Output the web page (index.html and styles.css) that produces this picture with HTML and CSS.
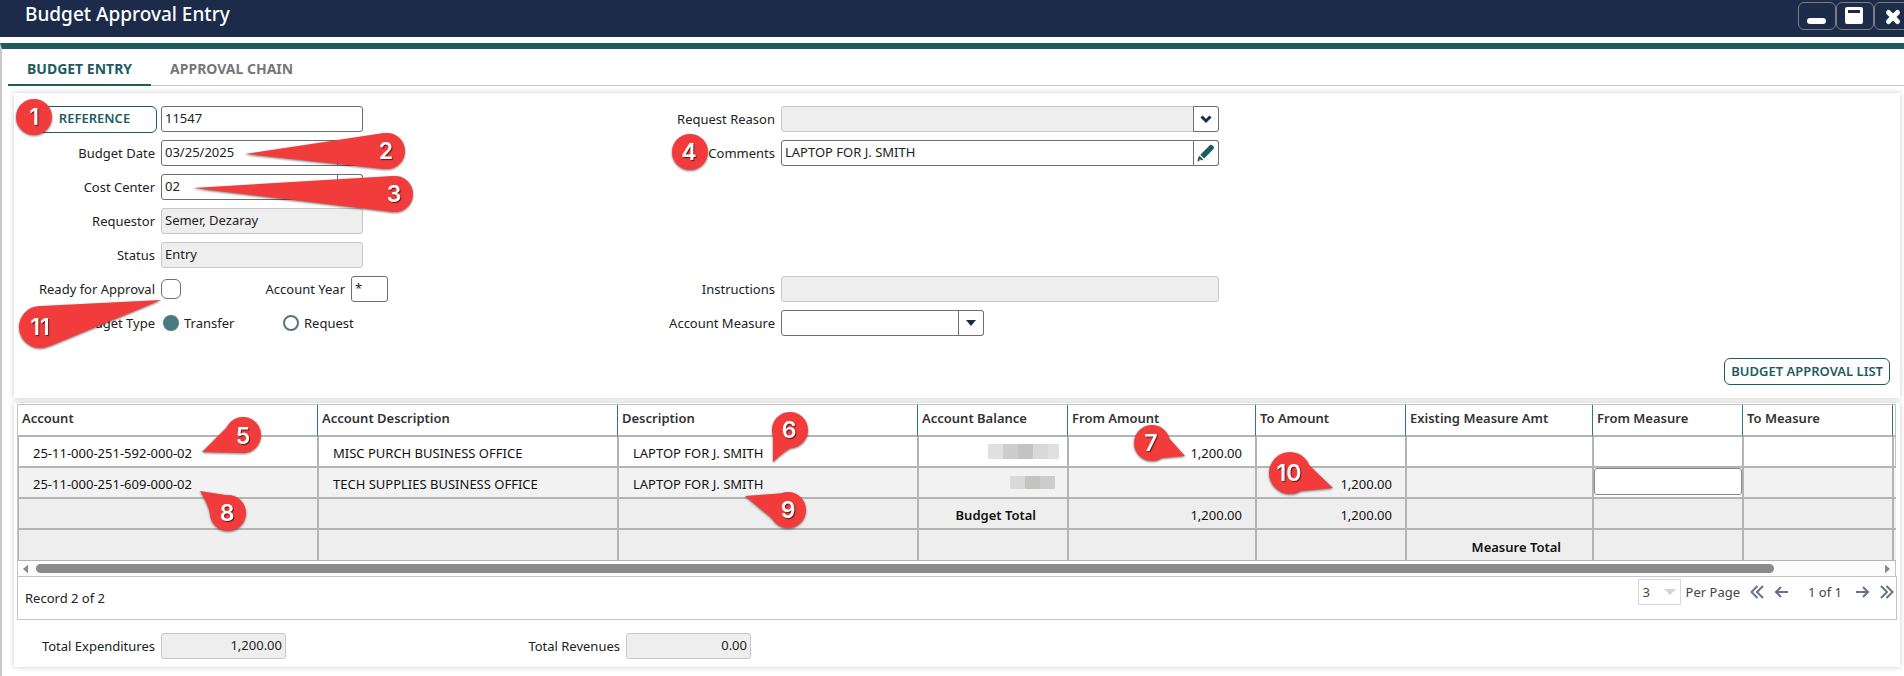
FILE: index.html
```html
<!DOCTYPE html>
<html lang="en">
<head>
  <meta charset="UTF-8">
  <title>Budget Approval Entry</title>
  <link rel="stylesheet" href="styles.css">
</head>
<body>
<header class="titlebar">
  <h1>Budget Approval Entry</h1>
  <div class="window-btns">
    <button class="win-btn" aria-label="Minimize"><svg viewBox="0 0 20 20"><rect x="0" y="12" width="19" height="6" rx="3"/></svg></button>
    <button class="win-btn" aria-label="Maximize"><svg viewBox="0 0 20 20"><path fill-rule="evenodd" d="M3 1h13a2 2 0 0 1 2 2v13a2 2 0 0 1-2 2H2a2 2 0 0 1-2-2V3a2 2 0 0 1 2-2zM3 4v3h12V4z"/></svg></button>
    <button class="win-btn" aria-label="Close"><svg viewBox="0 0 20 20"><path d="M5.500 6.500l9 9M14.500 6.500l-9 9" fill="none" stroke="#fff" stroke-width="5" stroke-linecap="round"/></svg></button>
  </div>
</header>

<main class="window">
  <nav class="tabs">
    <a class="tab active" href="#entry">BUDGET ENTRY</a>
    <a class="tab" href="#chain">APPROVAL CHAIN</a>
  </nav>

  <section class="panel" id="entry">
    <div class="form">
      <div class="form-col">
        <div class="field"><button class="btn ref-btn">REFERENCE</button><input class="box" type="text" value="11547" aria-label="Reference"></div>
        <div class="field"><label for="date">Budget Date</label><div class="combo"><input class="box" id="date" type="text" value="03/25/2025"><button class="combo-btn" aria-label="Pick date"></button></div></div>
        <div class="field"><label for="center">Cost Center</label><div class="combo"><input class="box" id="center" type="text" value="02"><button class="combo-btn" aria-label="Pick cost center"></button></div></div>
        <div class="field"><label for="requestor">Requestor</label><input class="box" id="requestor" type="text" value="Semer, Dezaray" readonly></div>
        <div class="field"><label for="status">Status</label><input class="box" id="status" type="text" value="Entry" readonly></div>
        <div class="field">
          <label for="ready">Ready for Approval</label><input class="check" id="ready" type="checkbox">
          <label class="year-label" for="year">Account Year</label><input class="box year" id="year" type="text" value="*">
        </div>
        <div class="field">
          <span class="label">Budget Type</span>
          <label class="radio"><input type="radio" name="type" checked>Transfer</label>
          <label class="radio"><input type="radio" name="type">Request</label>
        </div>
      </div>

      <div class="form-col wide">
        <div class="field">
          <label for="reason">Request Reason</label>
          <div class="combo">
            <select class="box" id="reason" disabled><option></option></select>
            <span class="combo-icon"><svg viewBox="0 0 12 12"><path d="M1.500 3.500L6 8l4.500-4.500" fill="none" stroke="#1b2b49" stroke-width="3"/></svg></span>
          </div>
        </div>
        <div class="field">
          <label for="comments">Comments</label>
          <div class="combo">
            <input class="box" id="comments" type="text" value="LAPTOP FOR J. SMITH">
            <button class="combo-btn" aria-label="Edit comments"><svg class="pencil" viewBox="0 0 18 18"><path d="M12.500 1.500q1.500-1.500 3 0l1 1q1.200 1.300 0 2.600L7.200 14.600 3.300 10.800zM2.600 11.700l3.700 3.700-2 1.200-1.400-1.500-.7 2.100-1.700.3.500-3.500z"/></svg></button>
          </div>
        </div>
        <div class="field spacer"></div>
        <div class="field spacer"></div>
        <div class="field spacer"></div>
        <div class="field"><label for="instructions">Instructions</label><div class="combo"><input class="box" id="instructions" type="text" readonly></div></div>
        <div class="field">
          <label for="measure">Account Measure</label>
          <div class="combo short">
            <select class="box" id="measure"><option></option></select>
            <span class="combo-icon"><svg viewBox="0 0 12 12"><path d="M1 3h10L6 9z" fill="#1b2b49"/></svg></span>
          </div>
        </div>
      </div>
    </div>
    <div class="panel-actions"><button class="btn">BUDGET APPROVAL LIST</button></div>
  </section>

  <section class="panel grid-panel">
    <div class="grid">
      <table>
        <colgroup>
          <col class="c-first"><col class="c-text"><col class="c-text"><col class="c-amt"><col class="c-from">
          <col class="c-amt"><col class="c-measure"><col class="c-amt"><col class="c-amt"><col class="c-end">
        </colgroup>
        <thead>
          <tr>
            <th>Account</th><th>Account Description</th><th>Description</th><th>Account Balance</th><th>From Amount</th>
            <th>To Amount</th><th>Existing Measure Amt</th><th>From Measure</th><th>To Measure</th><th></th>
          </tr>
        </thead>
        <tbody>
          <tr>
            <td>25-11-000-251-592-000-02</td><td>MISC PURCH BUSINESS OFFICE</td><td>LAPTOP FOR J. SMITH</td>
            <td class="masked"><div class="mask"><i class="m1"></i><i class="m3"></i><i class="m4"></i><i class="m2"></i><i class="m1 thin"></i></div></td>
            <td class="num">1,200.00</td><td></td><td></td><td></td><td></td><td></td>
          </tr>
          <tr class="alt">
            <td>25-11-000-251-609-000-02</td><td>TECH SUPPLIES BUSINESS OFFICE</td><td>LAPTOP FOR J. SMITH</td>
            <td class="masked"><div class="mask low"><i class="m2"></i><i class="m4"></i><i class="m3"></i></div></td>
            <td></td><td class="num">1,200.00</td><td></td><td class="edit"><input type="text" aria-label="From Measure"></td><td></td><td></td>
          </tr>
          <tr class="total">
            <td></td><td></td><td></td><td class="total-label">Budget Total</td><td class="num">1,200.00</td><td class="num">1,200.00</td><td></td><td></td><td></td><td></td>
          </tr>
          <tr class="total">
            <td></td><td></td><td></td><td></td><td></td><td></td><td class="total-label">Measure Total</td><td></td><td></td><td></td>
          </tr>
        </tbody>
      </table>
      <div class="scrollbar">
        <svg viewBox="0 0 6 10"><path d="M6 0v10L0 5z"/></svg>
        <div class="track"><div class="thumb"></div></div>
        <svg viewBox="0 0 6 10"><path d="M0 0v10l6-5z"/></svg>
      </div>
    </div>
    <div class="pager">
      <span class="record">Record 2 of 2</span>
      <div class="pager-nav">
        <div class="page-size">
          <select id="per-page" disabled><option>3</option></select>
          <svg viewBox="0 0 12 6"><path d="M0 0h12L6 6z"/></svg>
        </div>
        <label for="per-page">Per Page</label>
        <button class="nav-btn" aria-label="First page"><svg viewBox="0 0 14 14"><path d="M7.500 1l-6 6 6 6M13 1L7 7l6 6"/></svg></button>
        <button class="nav-btn" aria-label="Previous page"><svg viewBox="0 0 14 14"><path d="M7 2L2 7l5 5M2 7h12"/></svg></button>
        <span class="page-of">1 of 1</span>
        <button class="nav-btn" aria-label="Next page"><svg viewBox="0 0 14 14"><path d="M7 2l5 5-5 5M12 7H0"/></svg></button>
        <button class="nav-btn" aria-label="Last page"><svg viewBox="0 0 14 14"><path d="M6.500 1l6 6-6 6M1 1l6 6-6 6"/></svg></button>
      </div>
    </div>
    <div class="totals">
      <div class="field"><label for="expenditures">Total Expenditures</label><input class="box sum" id="expenditures" type="text" value="1,200.00" readonly></div>
      <div class="field revenues"><label for="revenues">Total Revenues</label><input class="box sum" id="revenues" type="text" value="0.00" readonly></div>
    </div>
  </section>
</main>

<!-- numbered callouts over the form -->
<svg class="callouts">
  <g><circle cx="34" cy="117" r="18"/><text x="34" y="125">1</text></g>
  <g><path d="M245 154L384 133v36z"/><circle cx="387" cy="151" r="18"/><text x="386" y="159">2</text></g>
  <g><path d="M193 188L393 176v36z"/><circle cx="395" cy="194" r="18"/><text x="394" y="202">3</text></g>
  <g><circle cx="690" cy="152" r="18"/><text x="689" y="160">4</text></g>
  <g><path d="M202 452l26-26 16 27z"/><circle cx="243" cy="435" r="18"/><text x="243" y="444">5</text></g>
  <g><path d="M773 462l0-28 22 13q-6 0-22 15z"/><circle cx="790" cy="430" r="18"/><text x="789" y="438">6</text></g>
  <g><path d="M1185 456l-17-19-14 24 8-3z"/><circle cx="1152" cy="443" r="18"/><text x="1151" y="451">7</text></g>
  <g><path d="M200 491l26 4-16 19q-1-8-10-23z"/><circle cx="228" cy="513" r="18"/><text x="227" y="521">8</text></g>
  <g><path d="M745 496l40-3-10 28z"/><circle cx="788" cy="510" r="18"/><text x="788" y="518">9</text></g>
  <g><path d="M1333 488l-25-24-13 29 6-2z"/><circle cx="1290" cy="473" r="21"/><text x="1289" y="481">10</text></g>
  <g><path d="M161 300L41 306l9 40z"/><circle cx="40" cy="327" r="21"/><text x="40" y="335">11</text></g>
</svg>
</body>
</html>
```

FILE: styles.css
```css
* { box-sizing: border-box; }
body {
  margin: 0;
  background: #fff;
  color: #222;
  font-family: 'Noto Sans', 'Liberation Sans', sans-serif;
  font-size: 13px;
  line-height: 16px;
  position: relative;
}
button, input, select { font: inherit; color: inherit; margin: 0; }
.titlebar {
  height: 37px;
  padding-left: 25px;
  background: #1b2b49;
  display: flex;
  justify-content: space-between;
  align-items: flex-start;
  overflow: hidden;
}
.titlebar h1 {
  margin: 2px 0 0;
  color: #fff;
  font-size: 19px;
  line-height: 24px;
  font-weight: 500;
}
.window-btns { display: flex; margin: 2px -8px 0 0; }
.win-btn {
  width: 38px;
  height: 28px;
  padding: 0;
  background: none;
  border: 1px solid #7d7d7d;
  border-radius: 6px;
}
.win-btn svg { width: 20px; height: 20px; fill: #fff; display: block; margin: 0 auto; }
.window {
  margin-top: 6px;
  border-top: 6px solid #1e5b61;
  border-left: 2px solid #c8c8c8;
  padding: 0 4px 9px 12px;
}
.tabs { display: flex; margin: 0 -4px 7px -6px; border-bottom: 1px solid #c8c8c8; }
.tab {
  height: 37px;
  margin-bottom: -1px;
  padding: 12px 19px 0;
  text-decoration: none;
  font-size: 14px;
  font-weight: 700;
  color: #777;
}
.tab.active { color: #1e5b61; border-bottom: 2px solid #1e5b61; }
.panel { background: #fff; box-shadow: 0 0 6px #0003; padding: 13px 10px; }
.form { display: flex; }
.form-col { width: 600px; display: flex; flex-direction: column; gap: 8px; }
.form-col.wide { width: 620px; }
.field { display: flex; align-items: center; height: 26px; }
.field > label:first-child, .field > .label { width: 131px; margin-right: 6px; text-align: right; }
.wide .field > label:first-child { width: 151px; }
.box {
  width: 202px;
  height: 26px;
  padding: 0 3px 2px;
  border: 1px solid #6e6e6e;
  border-radius: 3px;
  background: #fff;
  appearance: none;
  opacity: 1;
}
.box[readonly], .box:disabled { background: #eee; border-color: #c8c8c8; }
.combo { position: relative; width: 202px; display: flex; }
.combo .box { width: 100%; }
.wide .combo { width: 438px; }
.wide .combo.short { width: 203px; }
.combo-btn, .combo-icon {
  position: absolute;
  top: 0;
  right: 0;
  width: 26px;
  height: 26px;
  padding: 0;
  border: 1px solid #6e6e6e;
  border-radius: 0 3px 3px 0;
  background: #fff;
  display: flex;
  align-items: center;
  justify-content: center;
  pointer-events: none;
}
.combo-btn { pointer-events: auto; }
.combo-icon svg { width: 12px; height: 12px; }
.combo-btn .pencil { width: 18px; height: 18px; fill: #1e5b61; }
.btn {
  height: 27px;
  padding: 0 6px 2px;
  border: 1px solid #1e5b61;
  border-radius: 6px;
  background: #fff;
  color: #1e5b61;
  font-weight: 600;
}
.ref-btn { width: 125px; margin: 0 4px 0 8px; }
.check {
  appearance: none;
  width: 20px;
  height: 20px;
  border: 1px solid #6e6e6e;
  border-radius: 6px;
}
.year-label { width: 164px; margin-right: 6px; text-align: right; }
.box.year { width: 37px; }
.radio { display: flex; align-items: center; gap: 5px; width: 120px; padding-left: 2px; }
.radio input { appearance: none; width: 16px; height: 16px; border: 2px solid #4a7a80; border-radius: 50%; }
.radio input:checked { background: #4a7a80; }
.panel-actions { display: flex; justify-content: flex-end; padding-top: 22px; }
.grid-panel { margin-top: 5px; padding: 1px 3px 8px; }

.grid { border: 1px solid #c4c4c4; border-bottom: none; margin-right: 1px; }
table { width: 100%; table-layout: fixed; border-collapse: separate; border-spacing: 0; color: #111; }
.c-first { width: 299px; }
.c-text { width: 300px; }
.c-amt { width: 150px; }
.c-from { width: 188px; }
.c-measure { width: 187px; }
.c-end { width: 4px; }
th {
  height: 32px;
  padding: 0 0 4px 4px;
  border-left: 1px solid #2a7a80;
  border-bottom: 2px solid #b4b4b4;
  text-align: left;
  font-weight: 600;
  color: #333;
  white-space: nowrap;
}
th:first-child { border-left: none; }
td {
  height: 31px;
  padding: 3px 0 0 14px;
  border-left: 2px solid #b4b4b4;
  border-bottom: 2px solid #b4b4b4;
  white-space: nowrap;
}
td:first-child { border-left-width: 1px; }
th:last-child, td:last-child { padding: 0; }
.alt td { background: #f2f2f2; }
.total td { background: #eee; }
tr:last-child td { border-bottom-width: 1px; }
.num { text-align: right; padding-right: 13px; }
.total-label { text-align: right; padding-right: 31px; font-weight: 600; }
.masked { padding: 0; }
.mask { display: flex; justify-content: flex-end; height: 15px; margin-right: 8px; }
.mask.low { height: 13px; margin-right: 12px; }
.mask i { width: 15px; }
.mask .thin { width: 11px; }
.m1 { background: #e0e0e1; }
.m2 { background: #d9d9da; }
.m3 { background: #cdcdce; }
.m4 { background: #c3c3c2; }
.alt td.edit { padding: 0; background: #fff; vertical-align: top; }
.edit input { display: block; width: 100%; height: 27px; border: 1px solid #8a8a8a; border-radius: 3px; }

.scrollbar { height: 15px; padding: 0 5px; display: flex; align-items: center; gap: 8px; background: #fcfcfc; }
.scrollbar svg { width: 5px; height: 10px; fill: #8a8a8a; }
.track { flex: 1; }
.thumb { width: 94.4%; height: 9px; border-radius: 5px; background: #8a8a8a; }
.pager {
  height: 44px;
  border: 1px solid #c4c4c4;
  display: flex;
  justify-content: space-between;
  align-items: center;
  padding: 0 2px 0 7px;
}
.pager-nav { display: flex; align-items: center; align-self: flex-start; height: 26px; margin-top: 2px; color: #444; }
.page-size { position: relative; margin-right: 5px; }
.page-size select {
  display: block;
  width: 43px;
  height: 26px;
  padding: 0 4px;
  border: 1px solid #d8d8d8;
  background: #fff;
  appearance: none;
  opacity: 1;
}
.page-size svg { position: absolute; top: 10px; right: 5px; width: 12px; height: 6px; fill: #d0d3da; }
.nav-btn { padding: 0; border: none; background: none; width: 14px; height: 14px; margin-left: 10px; }
.nav-btn svg { display: block; width: 14px; height: 14px; fill: none; stroke: #66728a; stroke-width: 2; }
.page-of { margin: 0 4px 0 20px; }
.totals { display: flex; padding: 13px 7px 0; }
.revenues { margin-left: 203px; }
.box.sum { width: 125px; text-align: right; }

.callouts {
  position: absolute;
  left: 0;
  top: 0;
  width: 100%;
  height: 100%;
  pointer-events: none;
}
.callouts g { fill: #f23c3c; filter: drop-shadow(0 1px 1px #0008); }
.callouts text {
  fill: #fff;
  font-family: Inter, 'Liberation Sans', sans-serif;
  font-size: 23px;
  font-weight: 600;
  text-anchor: middle;
  text-shadow: 1px 1px 1px #0009;
}
```
